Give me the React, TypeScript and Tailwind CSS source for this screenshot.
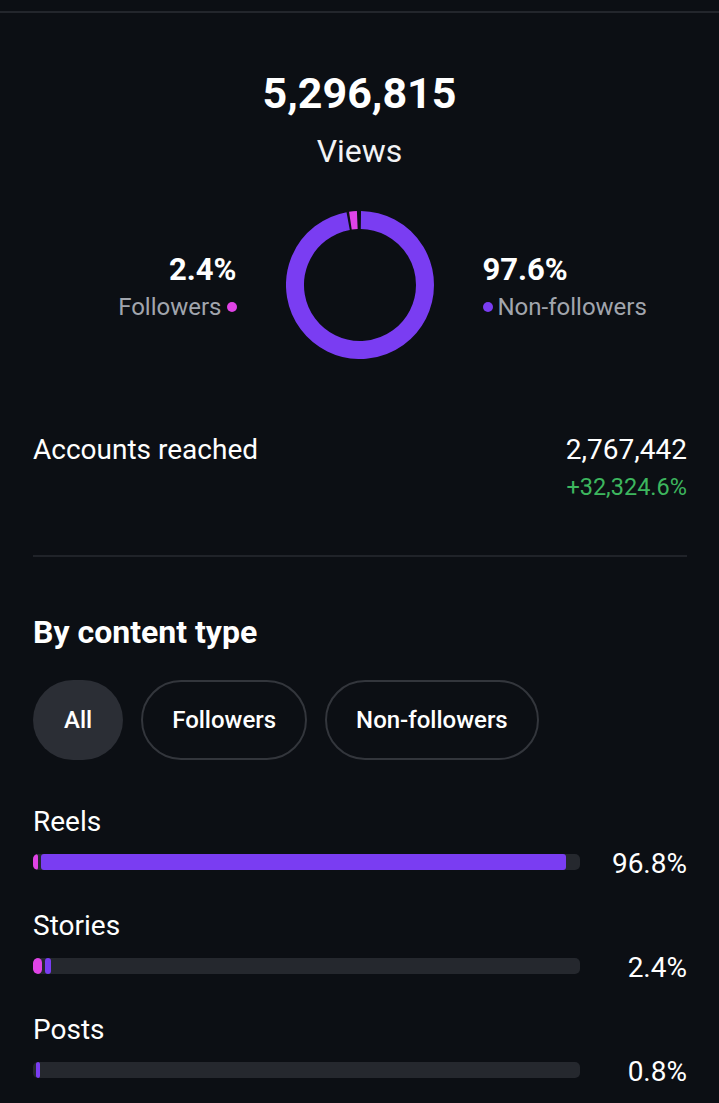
import React from "react";

const PURPLE = "#7a3df2";
const PINK = "#e043e6";

function arc(cx: number, cy: number, r: number, a0: number, a1: number) {
  const rad = (a: number) => (a * Math.PI) / 180;
  const x0 = cx + r * Math.sin(rad(a0));
  const y0 = cy - r * Math.cos(rad(a0));
  const x1 = cx + r * Math.sin(rad(a1));
  const y1 = cy - r * Math.cos(rad(a1));
  const large = a1 - a0 > 180 ? 1 : 0;
  return `M ${x0} ${y0} A ${r} ${r} 0 ${large} 1 ${x1} ${y1}`;
}

function Donut() {
  return (
    <svg width="148" height="148" viewBox="0 0 148 148">
      <path d={arc(74, 74, 65, 0.8, 349.5)} fill="none" stroke={PURPLE} strokeWidth="18" />
      <path d={arc(74, 74, 65, 351.5, 357.6)} fill="none" stroke={PINK} strokeWidth="18" />
    </svg>
  );
}

type Row = { label: string; pct: string; pink: number; purple: number };

const rows: Row[] = [
  { label: "Reels", pct: "96.8%", pink: 5, purple: 525 },
  { label: "Stories", pct: "2.4%", pink: 9, purple: 6 },
  { label: "Posts", pct: "0.8%", pink: 0, purple: 4 },
];

export default function App() {
  return (
    <div className="min-h-screen bg-[#0c0f14] text-white font-['Roboto',sans-serif] overflow-hidden">
      <div className="h-[11px]" />
      <div className="h-[2px] bg-[#23262c]" />

      <div className="flex flex-col items-center pt-[54px]">
        <div className="text-[43px] font-bold leading-[52px]">5,296,815</div>
        <div className="text-[32px] leading-[36px] mt-[14px] text-[#f2f3f5]">Views</div>
      </div>

      <div className="grid grid-cols-[1fr_148px_1fr] gap-x-[49px] items-center mt-[42px]">
        <div className="flex flex-col items-end mt-[4px]">
          <div className="text-[31px] font-bold leading-[36px]">2.4%</div>
          <div className="flex items-center gap-[5px] mt-[4px]">
            <span className="text-[24px] leading-[30px] text-[#a1a5ad]">Followers</span>
            <span className="w-[10px] h-[10px] rounded-full bg-[#e043e6]" />
          </div>
        </div>
        <Donut />
        <div className="flex flex-col items-start mt-[4px]">
          <div className="text-[31px] font-bold leading-[36px]">97.6%</div>
          <div className="flex items-center gap-[5px] mt-[4px]">
            <span className="w-[10px] h-[10px] rounded-full bg-[#7a3df2]" />
            <span className="text-[24px] leading-[30px] text-[#a1a5ad]">Non-followers</span>
          </div>
        </div>
      </div>

      <div className="pl-[33px] pr-[32px]">
        <div className="flex justify-between items-start mt-[75px]">
          <div className="text-[28px] leading-[32px]">Accounts reached</div>
          <div className="flex flex-col items-end">
            <div className="text-[28px] leading-[32px]">2,767,442</div>
            <div className="text-[23.5px] leading-[28px] mt-[7px] text-[#3db65e]">+32,324.6%</div>
          </div>
        </div>

        <div className="h-[2px] bg-[#202329] mt-[54px]" />

        <div className="text-[32px] font-bold leading-[36px] mt-[57px]">By content type</div>

        <div className="flex gap-[18px] mt-[30px]">
          <div className="h-[80px] px-[31px] rounded-full bg-[#2b2e35] flex items-center text-[24px] font-medium">All</div>
          <div className="h-[80px] px-[29px] rounded-full border-2 border-[#33363c] flex items-center text-[24px] font-medium">Followers</div>
          <div className="h-[80px] px-[29px] rounded-full border-2 border-[#33363c] flex items-center text-[24px] font-medium">Non-followers</div>
        </div>

        <div className="mt-[46px] flex flex-col gap-[40px]">
          {rows.map((r) => (
            <div key={r.label} className="flex flex-col">
              <div className="text-[28px] leading-[32px]">{r.label}</div>
              <div className="flex items-center mt-[16px] h-[16px]">
                <div className="w-[547px] h-[16px] rounded-[5px] bg-[#25282e] flex overflow-hidden">
                  {r.pink > 0 && (
                    <div className="h-full rounded-[5px] bg-[#e043e6] mr-[3px]" style={{ width: r.pink }} />
                  )}
                  {r.pink === 0 && <div className="w-[3px]" />}
                  <div className="h-full rounded-[3px] bg-[#7a3df2]" style={{ width: r.purple }} />
                </div>
                <div className="ml-auto text-[28px] leading-[32px] mt-[4px]">{r.pct}</div>
              </div>
            </div>
          ))}
        </div>
      </div>
    </div>
  );
}
